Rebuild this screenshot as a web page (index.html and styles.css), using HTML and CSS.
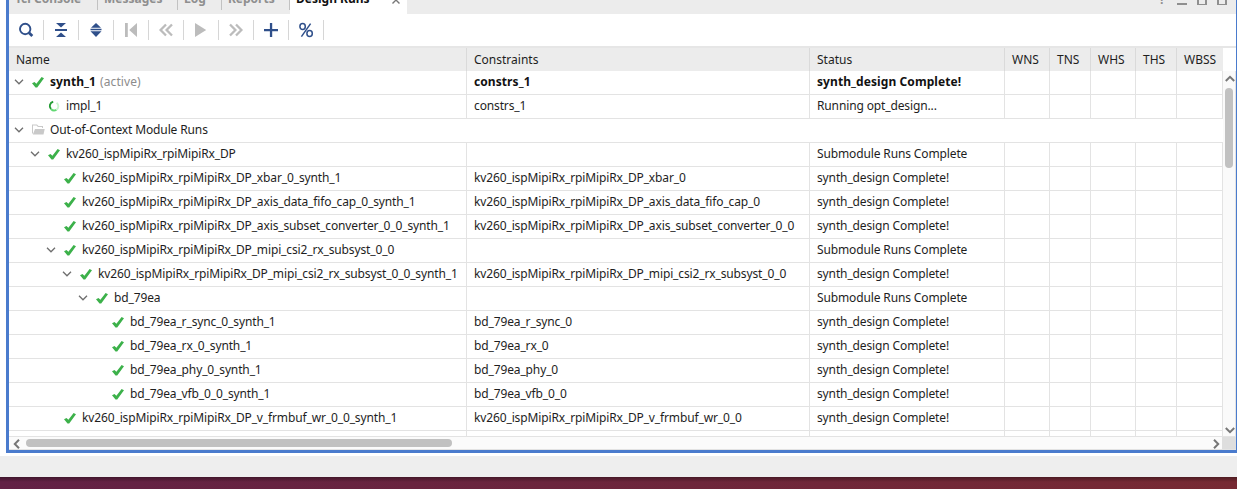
FILE: index.html
```html
<!DOCTYPE html>
<html lang="en">
<head>
<meta charset="utf-8">
<title>Design Runs</title>
<link rel="stylesheet" href="styles.css">
</head>
<body>
<svg class="defs" width="0" height="0">
  <symbol id="check" viewBox="0 0 12 11"><path d="M0 6.2 2.500 4.900 4.400 6.700 9.600 0 12 1.200 5.200 10.600H3.500Z" fill="#3cb14a"/></symbol>
  <symbol id="chev" viewBox="0 0 10 6"><path d="M1 0.8 5 4.8 9 0.8" fill="none" stroke="#6e6e6e" stroke-width="1.3"/></symbol>
</svg>
<div class="panel">
  <div class="tabs">
    <span class="tab t1"><b>Tcl Console</b></span>
    <span class="tab t2"><b>Messages</b></span>
    <span class="tab t3"><b>Log</b></span>
    <span class="tab t4"><b>Reports</b></span>
    <span class="tab t5 on"><b>Design Runs</b><svg width="8" height="8" viewBox="0 0 8 8"><path d="M.5.5l7 7M7.5.5l-7 7" stroke="#777" stroke-width="1.4"/></svg></span>
    <span class="winbtns"><b>?</b><i class="min"></i><i class="box"></i><i class="box"></i></span>
  </div>
  <div class="toolbar">
    <span class="tool"><svg width="16" height="16" viewBox="0 0 16 16" fill="none" stroke="#2f4f8a"><circle cx="7.2" cy="7" r="5.2" stroke-width="1.9"/><path d="M11 10.8 14.3 14" stroke-width="2.8"/></svg></span>
    <span class="tool"><svg width="16" height="16" viewBox="0 0 16 16" fill="#2f4f8a"><path d="M3 1h10L8 5.6ZM2 7h12v2H2ZM8 10.4 13 15H3Z"/></svg></span>
    <span class="tool"><svg width="16" height="16" viewBox="0 0 16 16" fill="#2f4f8a"><path d="M8 1 13 5.7H3ZM2.5 6.8h11v1.5h-11ZM2.5 9.3h11L8 15Z"/></svg></span>
    <span class="tool"><svg width="16" height="16" viewBox="0 0 16 16" fill="#bcbcbc"><path d="M2 1h2.8v14H2ZM14 1v14L6.2 8Z"/></svg></span>
    <span class="tool"><svg width="16" height="16" viewBox="0 0 16 16" fill="none" stroke="#bcbcbc" stroke-width="2.300"><path d="M8 2.5 2.6 8 8 13.5M14 2.5 8.6 8l5.4 5.5"/></svg></span>
    <span class="tool"><svg width="16" height="16" viewBox="0 0 16 16" fill="#bcbcbc"><path d="M2 1 13.2 8 2 15Z"/></svg></span>
    <span class="tool"><svg width="16" height="16" viewBox="0 0 16 16" fill="none" stroke="#bcbcbc" stroke-width="2.300"><path d="M2 2.5 7.4 8 2 13.5M8 2.5 13.4 8 8 13.5"/></svg></span>
    <span class="tool"><svg width="16" height="16" viewBox="0 0 16 16" fill="#2f4f8a"><path d="M1 6.9h14v2.3H1ZM6.9 1h2.3v14H6.9Z"/></svg></span>
    <span class="tool"><svg width="16" height="16" viewBox="0 0 16 16" fill="none" stroke="#2f4f8a" stroke-width="1.5"><ellipse cx="4.6" cy="4.6" rx="2.7" ry="3"/><ellipse cx="11.6" cy="11.6" rx="2.7" ry="3"/><path d="M12.6 1.6 3.4 14.6"/></svg></span>
  </div>
  <div class="row head"><span>Name</span><span>Constraints</span><span>Status</span><span>WNS</span><span>TNS</span><span>WHS</span><span>THS</span><span>WBSS</span></div>
  <div class="main">
    <div class="rows">
      <div class="row bold"><span class="name l0"><svg class="chev"><use href="#chev"/></svg><svg class="check"><use href="#check"/></svg><b>synth_1</b><em>(active)</em></span><span>constrs_1</span><span>synth_design Complete!</span><span></span><span></span><span></span><span></span><span></span></div>
      <div class="row"><span class="name l1"><svg class="spin" viewBox="0 0 12 12" fill="none" stroke-width="1.9"><path d="M5.2 1.8A4.3 4.3 0 0 0 3 9" stroke="#249c34"/><path d="M3 9a4.3 4.3 0 0 0 5.5.7" stroke="#62d873"/><path d="M8.5 9.700A4.300 4.300 0 0 0 8.600 2.700" stroke="#c9f5cd"/></svg><b>impl_1</b></span><span>constrs_1</span><span>Running opt_design...</span><span></span><span></span><span></span><span></span><span></span></div>
      <div class="row group"><span class="name l0"><svg class="chev"><use href="#chev"/></svg><svg class="folder" viewBox="0 0 13 11" fill="#c9c9c9"><path d="M0 0.500h5L6.500 2H11v2h-1V3H6L4.500 1.500H1V9L0 10Z"/><path d="M3 5h9.700L11.500 10.500H.8Z"/></svg><b>Out-of-Context Module Runs</b></span></div>
      <div class="row"><span class="name l1"><svg class="chev"><use href="#chev"/></svg><svg class="check"><use href="#check"/></svg><b>kv260_ispMipiRx_rpiMipiRx_DP</b></span><span></span><span>Submodule Runs Complete</span><span></span><span></span><span></span><span></span><span></span></div>
      <div class="row"><span class="name l2"><svg class="check"><use href="#check"/></svg><b>kv260_ispMipiRx_rpiMipiRx_DP_xbar_0_synth_1</b></span><span>kv260_ispMipiRx_rpiMipiRx_DP_xbar_0</span><span>synth_design Complete!</span><span></span><span></span><span></span><span></span><span></span></div>
      <div class="row"><span class="name l2"><svg class="check"><use href="#check"/></svg><b>kv260_ispMipiRx_rpiMipiRx_DP_axis_data_fifo_cap_0_synth_1</b></span><span>kv260_ispMipiRx_rpiMipiRx_DP_axis_data_fifo_cap_0</span><span>synth_design Complete!</span><span></span><span></span><span></span><span></span><span></span></div>
      <div class="row"><span class="name l2"><svg class="check"><use href="#check"/></svg><b>kv260_ispMipiRx_rpiMipiRx_DP_axis_subset_converter_0_0_synth_1</b></span><span>kv260_ispMipiRx_rpiMipiRx_DP_axis_subset_converter_0_0</span><span>synth_design Complete!</span><span></span><span></span><span></span><span></span><span></span></div>
      <div class="row"><span class="name l2"><svg class="chev"><use href="#chev"/></svg><svg class="check"><use href="#check"/></svg><b>kv260_ispMipiRx_rpiMipiRx_DP_mipi_csi2_rx_subsyst_0_0</b></span><span></span><span>Submodule Runs Complete</span><span></span><span></span><span></span><span></span><span></span></div>
      <div class="row"><span class="name l3"><svg class="chev"><use href="#chev"/></svg><svg class="check"><use href="#check"/></svg><b>kv260_ispMipiRx_rpiMipiRx_DP_mipi_csi2_rx_subsyst_0_0_synth_1</b></span><span>kv260_ispMipiRx_rpiMipiRx_DP_mipi_csi2_rx_subsyst_0_0</span><span>synth_design Complete!</span><span></span><span></span><span></span><span></span><span></span></div>
      <div class="row"><span class="name l4"><svg class="chev"><use href="#chev"/></svg><svg class="check"><use href="#check"/></svg><b>bd_79ea</b></span><span></span><span>Submodule Runs Complete</span><span></span><span></span><span></span><span></span><span></span></div>
      <div class="row"><span class="name l5"><svg class="check"><use href="#check"/></svg><b>bd_79ea_r_sync_0_synth_1</b></span><span>bd_79ea_r_sync_0</span><span>synth_design Complete!</span><span></span><span></span><span></span><span></span><span></span></div>
      <div class="row"><span class="name l5"><svg class="check"><use href="#check"/></svg><b>bd_79ea_rx_0_synth_1</b></span><span>bd_79ea_rx_0</span><span>synth_design Complete!</span><span></span><span></span><span></span><span></span><span></span></div>
      <div class="row"><span class="name l5"><svg class="check"><use href="#check"/></svg><b>bd_79ea_phy_0_synth_1</b></span><span>bd_79ea_phy_0</span><span>synth_design Complete!</span><span></span><span></span><span></span><span></span><span></span></div>
      <div class="row"><span class="name l5"><svg class="check"><use href="#check"/></svg><b>bd_79ea_vfb_0_0_synth_1</b></span><span>bd_79ea_vfb_0_0</span><span>synth_design Complete!</span><span></span><span></span><span></span><span></span><span></span></div>
      <div class="row"><span class="name l2"><svg class="check"><use href="#check"/></svg><b>kv260_ispMipiRx_rpiMipiRx_DP_v_frmbuf_wr_0_0_synth_1</b></span><span>kv260_ispMipiRx_rpiMipiRx_DP_v_frmbuf_wr_0_0</span><span>synth_design Complete!</span><span></span><span></span><span></span><span></span><span></span></div>
      <div class="row"><span></span><span></span><span></span><span></span><span></span><span></span><span></span><span></span></div>
    </div>
    <div class="vscroll">
      <svg width="10" height="7" viewBox="0 0 10 7"><path d="M.8 6 5 1.800 9.200 6" fill="none" stroke="#777" stroke-width="2"/></svg>
      <i></i>
      <svg width="10" height="7" viewBox="0 0 10 7"><path d="M.8 1 5 5.200 9.200 1" fill="none" stroke="#777" stroke-width="2"/></svg>
    </div>
  </div>
  <div class="bottom">
    <div class="hscroll">
      <svg width="7" height="10" viewBox="0 0 7 10"><path d="M6 .8 1.800 5 6 9.200" fill="none" stroke="#777" stroke-width="2"/></svg>
      <i></i>
      <svg width="7" height="10" viewBox="0 0 7 10"><path d="M1 .8 5.200 5 1 9.200" fill="none" stroke="#777" stroke-width="2"/></svg>
    </div>
    <div class="corner"></div>
  </div>
</div>
<div class="statusbar"></div>
<div class="desktop"></div>
</body>
</html>
```
FILE: styles.css
```css
* { box-sizing: border-box; }
body { margin: 0; width: 1237px; height: 489px; overflow: hidden; background: #fff; font: 12px/16px "Noto Sans", sans-serif; color: #1e1e1e; }
b, em, i { font-weight: inherit; font-style: normal; }
svg { display: block; flex: none; }
.defs { position: absolute; }
.panel { margin-left: 6px; width: 1231px; height: 453px; border: solid #4a7bcd; border-width: 0 1px 3px 3px; }

.tabs { display: flex; height: 14px; background: #ececec; font-weight: bold; color: #8f8f8f; overflow: hidden; }
.tab { height: 10px; padding-left: 6px; border-right: 1px solid #c2c2c2; white-space: nowrap; }
.tab b { display: block; margin-top: -9px; }
.t1 { width: 89px; }
.t2 { width: 80px; }
.t3 { width: 44px; }
.t4 { width: 68px; }
.tab.on { display: flex; width: 117px; height: 14px; background: #fff; color: #111; border: 0; }
.on svg { margin: -4px 0 0 22px; }
.winbtns { display: flex; margin-left: auto; padding-right: 9px; }
.winbtns b { margin: -8px 12px 0 0; }
.min { width: 10px; height: 2px; margin: 3px 10px 0 0; background: #8f8f8f; }
.box { width: 10px; height: 10px; margin-top: -5px; border: 2px solid #8f8f8f; border-bottom-width: 1px; }
.box + .box { margin-left: 10px; }

.toolbar { display: flex; height: 34px; padding-top: 6px; border-bottom: 2px solid #e6e6e6; }
.tool { width: 35px; height: 20px; padding: 2px 0 0 9px; border-right: 1px solid #d6d6d6; }

.row { display: grid; grid-template-columns: 458px 343px 195px 45px 41px 45px 41px 46px; width: 1214px; height: 24px; border-bottom: 1px solid #e3e3e3; letter-spacing: -.13px; }
.row > span { padding: 3px 0 0 7px; border-right: 1px solid #e3e3e3; white-space: nowrap; }
.row.head { height: 23px; background: #ececec; border: 0; letter-spacing: 0; }
.head > span { padding-top: 4px; border-color: #dadada; }
.head > span:last-child { border: 0; }
.row.bold { font-weight: bold; color: #111; letter-spacing: .08px; }
.bold em { margin-left: 4px; font-weight: normal; color: #8c8c8c; }
.row > .name { display: flex; justify-content: flex-start; padding-left: 23px; }
.row > .l1 { padding-left: 39px; }
.row > .l2 { padding-left: 55px; }
.row > .l3 { padding-left: 71px; }
.row > .l4 { padding-left: 87px; }
.row > .l5 { padding-left: 103px; }
.chev { width: 10px; height: 6px; margin: 5px 8px 0 -18px; }
.check { width: 12px; height: 11px; margin: 3px 6px 0 0; }
.spin { width: 12px; height: 12px; margin: 2px 6px 0 0; }
.folder { width: 13px; height: 11px; margin: 2px 5px 0 0; }
.group { grid-template-columns: 1213px; }
.row.group > span { border-right: 0; }

.main { display: flex; height: 365px; }
.rows { width: 1214px; height: 365px; overflow: hidden; }
.vscroll { display: flex; flex-direction: column; width: 13px; padding: 4px 0 2px 2px; background: #fafafa; border-right: 1px solid #e3e3e3; }
.vscroll i { width: 8px; height: 80px; margin: 6px 0 auto 0; border-radius: 4px; background: #c1c1c1; }

.bottom { display: flex; height: 14px; border-top: 1px solid #e3e3e3; border-bottom: 1px solid #e3e3e3; }
.hscroll { display: flex; width: 1213px; padding: 2px 2px 0 4px; background: #fbfbfb; }
.hscroll i { width: 426px; height: 8px; margin: 0 auto 0 6px; border-radius: 4px; background: #c1c1c1; }
.corner { width: 14px; background: #dedede; }

.statusbar { height: 21px; margin-top: 3px; background: #eee; }
.desktop { height: 12px; background: linear-gradient(rgba(0,0,0,.35), rgba(0,0,0,0) 5px), linear-gradient(90deg, #622145, #772a33); }
```
